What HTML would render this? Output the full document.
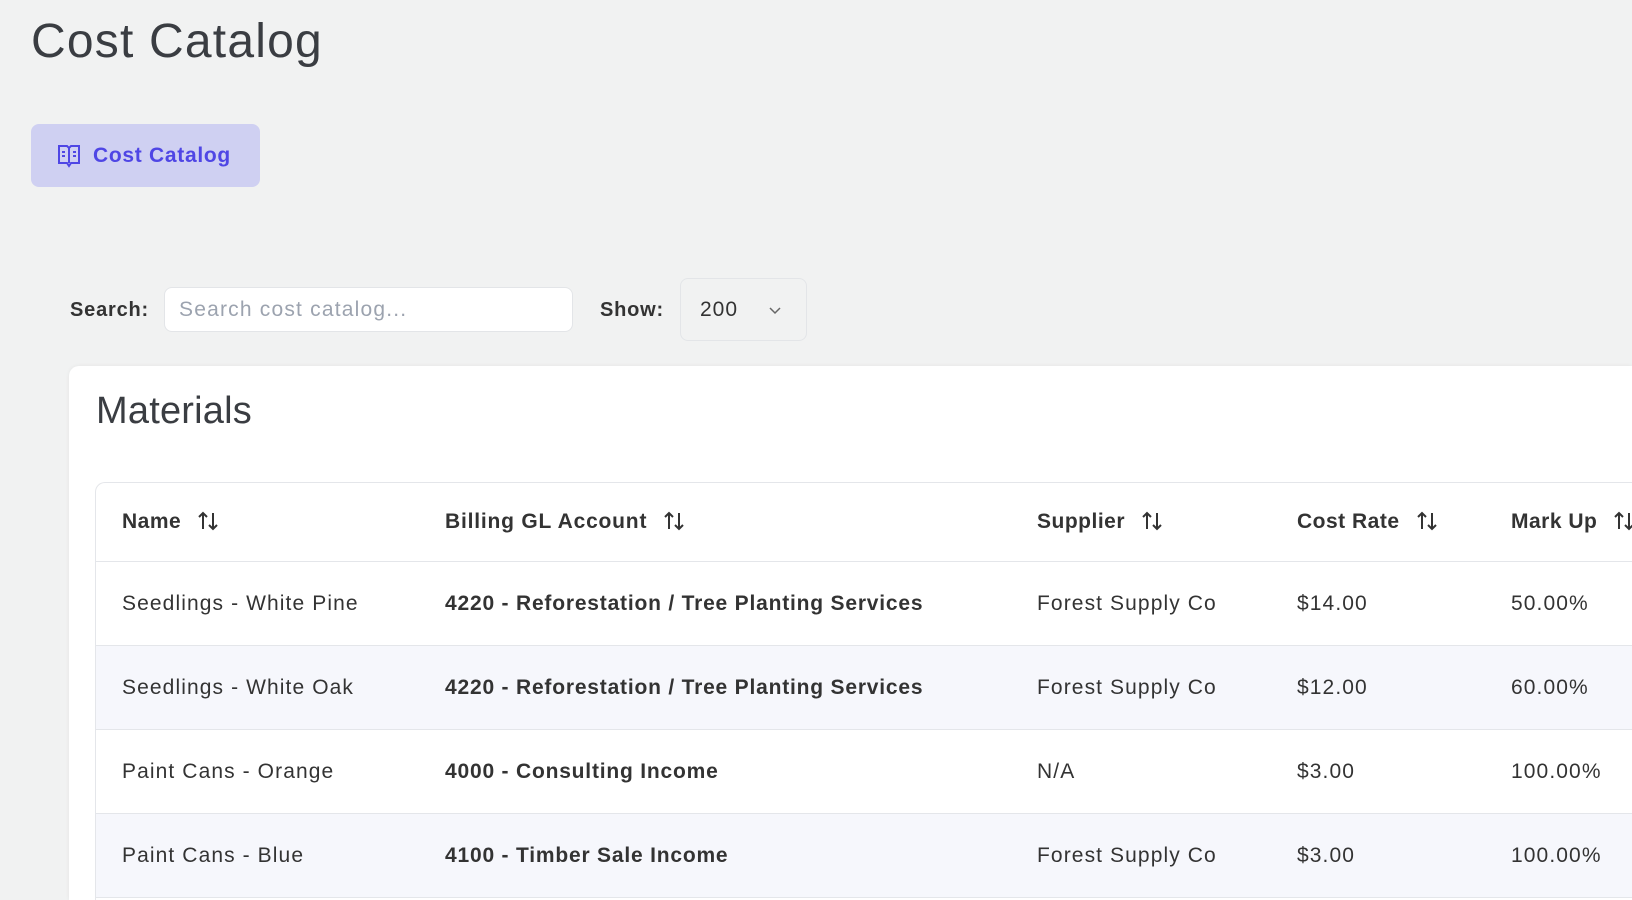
<!DOCTYPE html>
<html><head><style>
*{box-sizing:border-box;margin:0;padding:0}
html{width:1632px;height:900px;overflow:hidden}
body{width:1632px;height:900px;overflow:hidden;background:#f1f2f2;font-family:"Liberation Sans",sans-serif;color:#374151;position:relative}
.abs{position:absolute}
h1{position:absolute;left:31px;top:14px;font-size:48px;font-weight:400;color:#3a3d42;letter-spacing:1.2px}
.btn{left:31px;top:124px;width:229px;height:63px;background:#cfd0f2;border-radius:8px;color:#4f46e5;font-weight:700;font-size:21px;display:flex;align-items:center;padding-left:26px;letter-spacing:0.7px}
.btn svg{margin-right:12px}
.lbl{font-size:20px;color:#333;font-weight:700;letter-spacing:0.8px}
.inp{left:164px;top:287px;width:409px;height:45px;background:#fff;border:1px solid #e3e5e8;border-radius:8px;font-size:21px;color:#9ca3af;padding:10px 14px;letter-spacing:1.2px}
.sel{left:680px;top:278px;width:127px;height:63px;border:1px solid #e3e5e8;border-radius:8px;font-size:21px;color:#333;padding:19px 19px;letter-spacing:1px}
.card{left:69px;top:366px;width:1563px;height:534px;background:#fff;border-radius:10px 0 0 0;box-shadow:0 0 4px rgba(0,0,0,.06)}
.mat{left:96px;top:390px;font-size:38px;color:#3a3d42;letter-spacing:0.2px}
.tbl{left:95px;top:482px;width:1537px;height:418px;border:1px solid #e4e6ea;border-right:none;border-bottom:none;border-radius:10px 0 0 0;overflow:hidden}
.row{position:absolute;left:0;width:100%;border-top:1px solid #e4e6ea;font-size:21px;color:#333;letter-spacing:1.1px}
.row>span{position:absolute;top:50%;transform:translateY(-50%);white-space:nowrap}
.hd{border-top:none;letter-spacing:0.5px}
.hd>span{font-weight:700}
.alt{background:#f6f7fc}
.c1{left:26px}.c2{left:349px;font-weight:700;letter-spacing:0.8px}.c3{left:941px}.c4{left:1201px}.c5{left:1415px}
.ar{display:inline-block;vertical-align:middle;margin-left:16px;margin-top:-3px}
</style></head><body>
<h1>Cost Catalog</h1>
<div class="abs btn"><svg width="24" height="26" viewBox="0 0 24 26" fill="none" stroke="#4f46e5" stroke-width="2"><path d="M2 3h8l2 2 2-2h8v17h-8l-2 3-2-3H2z"/><path d="M12 5v15"/><path d="M5 9h3M5 13h3M16 9h3M16 13h3"/></svg>Cost Catalog</div>
<div class="abs lbl" style="left:70px;top:299px">Search:</div>
<div class="abs inp">Search cost catalog...</div>
<div class="abs lbl" style="left:600px;top:299px">Show:</div>
<div class="abs sel">200<svg style="position:absolute;left:87px;top:27px" width="14" height="9" viewBox="0 0 14 9" fill="none" stroke="#666" stroke-width="1.5"><path d="M2 2l5 5 5-5"/></svg></div>
<div class="abs card"></div>
<div class="abs mat">Materials</div>
<div class="abs tbl">
<div class="row hd" style="top:0;height:78px">
<span class="c1">Name<svg class="ar" width="22" height="20" viewBox="0 0 22 20" fill="none" stroke="#333" stroke-width="2"><path d="M6 18V2M2 6l4-4 4 4M16 2v16M12 14l4 4 4-4"/></svg></span>
<span class="c2">Billing GL Account<svg class="ar" width="22" height="20" viewBox="0 0 22 20" fill="none" stroke="#333" stroke-width="2"><path d="M6 18V2M2 6l4-4 4 4M16 2v16M12 14l4 4 4-4"/></svg></span>
<span class="c3">Supplier<svg class="ar" width="22" height="20" viewBox="0 0 22 20" fill="none" stroke="#333" stroke-width="2"><path d="M6 18V2M2 6l4-4 4 4M16 2v16M12 14l4 4 4-4"/></svg></span>
<span class="c4">Cost Rate<svg class="ar" width="22" height="20" viewBox="0 0 22 20" fill="none" stroke="#333" stroke-width="2"><path d="M6 18V2M2 6l4-4 4 4M16 2v16M12 14l4 4 4-4"/></svg></span>
<span class="c5">Mark Up<svg class="ar" width="22" height="20" viewBox="0 0 22 20" fill="none" stroke="#333" stroke-width="2"><path d="M6 18V2M2 6l4-4 4 4M16 2v16M12 14l4 4 4-4"/></svg></span></div>
<div class="row" style="top:78px;height:84px"><span class="c1">Seedlings - White Pine</span><span class="c2">4220 - Reforestation / Tree Planting Services</span><span class="c3">Forest Supply Co</span><span class="c4">$14.00</span><span class="c5">50.00%</span></div>
<div class="row alt" style="top:162px;height:84px"><span class="c1">Seedlings - White Oak</span><span class="c2">4220 - Reforestation / Tree Planting Services</span><span class="c3">Forest Supply Co</span><span class="c4">$12.00</span><span class="c5">60.00%</span></div>
<div class="row" style="top:246px;height:84px"><span class="c1">Paint Cans - Orange</span><span class="c2">4000 - Consulting Income</span><span class="c3">N/A</span><span class="c4">$3.00</span><span class="c5">100.00%</span></div>
<div class="row alt" style="top:330px;height:84px"><span class="c1">Paint Cans - Blue</span><span class="c2">4100 - Timber Sale Income</span><span class="c3">Forest Supply Co</span><span class="c4">$3.00</span><span class="c5">100.00%</span></div>
<div class="row" style="top:414px;height:4px"></div>
</div>
</body></html>
